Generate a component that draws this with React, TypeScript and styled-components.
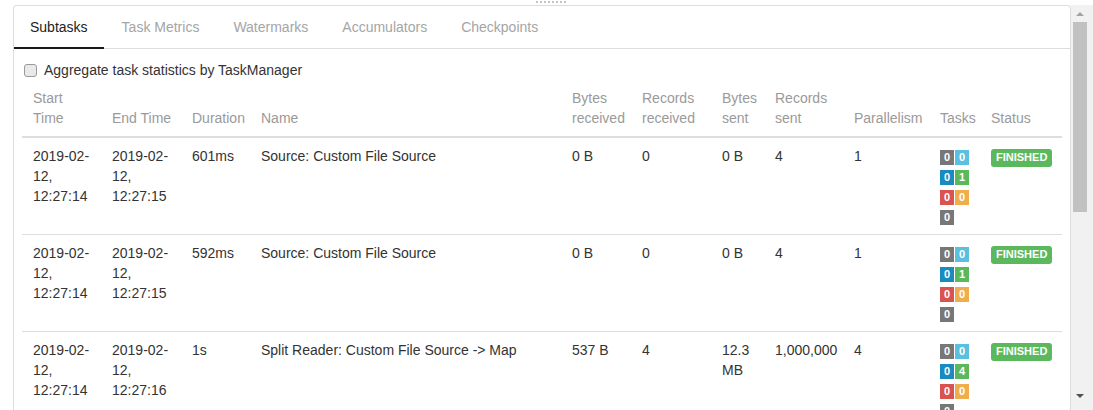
import React from 'react';
import styled, { createGlobalStyle } from 'styled-components';

const GlobalStyle = createGlobalStyle`
  html, body, #root {
    margin: 0;
    height: 100%;
    overflow: hidden;
  }
  body {
    background: #fff;
    font-family: "Liberation Sans", Arial, sans-serif;
    font-size: 14px;
    color: #333;
  }
`;

const Page = styled.div`
  display: flex;
  flex-direction: column;
  height: 410px;
`;

const Handle = styled.div`
  height: 5px;
  display: flex;
  justify-content: center;
  align-items: flex-start;
  gap: 2px;
  padding: 1px 0 0 9px;
  box-sizing: border-box;
`;

const Dot = styled.span`
  width: 2px;
  height: 2px;
  background: #c4c4c4;
`;

const Body = styled.div`
  display: flex;
  flex: 1;
  min-height: 0;
`;

const Main = styled.div`
  flex: 1;
  padding-left: 13px;
  overflow: hidden;
`;

const Panel = styled.div`
  border: 1px solid #ddd;
  border-bottom: none;
  border-radius: 4px 4px 0 0;
  background: #fff;
`;

const Tabs = styled.div`
  display: flex;
  gap: 2px;
  border-bottom: 1px solid #ddd;
`;

const Tab = styled.div<{ $active?: boolean }>`
  padding: 11px 16px 10px;
  line-height: 20px;
  margin-bottom: -1px;
  border-bottom: 2px solid ${p => (p.$active ? '#1a1a1a' : 'transparent')};
  color: ${p => (p.$active ? '#222' : '#a5a5a5')};
  cursor: pointer;
`;

const Content = styled.div`
  padding: 11px 8px 0;
`;

const CheckRow = styled.label`
  display: flex;
  align-items: center;
  height: 20px;
  line-height: 20px;
`;

const Checkbox = styled.input`
  appearance: none;
  width: 13px;
  height: 13px;
  margin: 0 7px 0 2px;
  border: 1px solid #9a9a9a;
  border-radius: 3px;
  background: #e9e9e9;
  box-sizing: border-box;
`;

const Table = styled.table`
  width: 100%;
  border-collapse: collapse;
  table-layout: fixed;
`;

const Th = styled.th`
  text-align: left;
  font-weight: normal;
  color: #9a9a9a;
  padding: 8px 4px 8px 8px;
  line-height: 20px;
  vertical-align: bottom;
  border-bottom: 2px solid #ddd;

  &:first-child {
    padding-left: 11px;
    padding-right: 8px;
  }
`;

const Td = styled.td`
  padding: 8px 4px 8px 8px;
  line-height: 20px;
  vertical-align: top;
  border-bottom: 1px solid #ddd;

  &:first-child {
    padding-left: 11px;
    padding-right: 8px;
  }
`;

const BadgeGrid = styled.div`
  display: grid;
  grid-template-columns: repeat(2, 14px);
  column-gap: 1px;
  row-gap: 5px;
  padding: 4px 0 1px;
`;

const Badge = styled.span<{ $color: string }>`
  display: block;
  height: 15px;
  line-height: 15px;
  text-align: center;
  background: ${p => p.$color};
  color: #fff;
  font-size: 11px;
  font-weight: bold;
`;

const Status = styled.span`
  display: inline-block;
  margin-top: 3px;
  padding: 3px 5px 4px;
  border-radius: 3px;
  background: #5cb85c;
  color: #fff;
  font-size: 11px;
  font-weight: bold;
  line-height: 11px;
`;

const Scrollbar = styled.div`
  width: 22px;
  background: #f1f1f1;
  display: flex;
  flex-direction: column;
`;

const ArrowButton = styled.div<{ $bottom?: boolean }>`
  width: 18px;
  height: 17px;
  display: flex;
  align-items: center;
  justify-content: center;
  margin-bottom: ${p => (p.$bottom ? '6px' : '0')};
`;

const Arrow = styled.span<{ $down?: boolean }>`
  width: 0;
  height: 0;
  border-left: 4px solid transparent;
  border-right: 4px solid transparent;
  ${p =>
    p.$down
      ? 'border-top: 4px solid #505050;'
      : 'border-bottom: 4px solid #a3a3a3;'}
`;

const Thumb = styled.div`
  width: 14px;
  height: 190px;
  margin-left: 2px;
  background: #c1c1c1;
`;

const Spacer = styled.div`
  flex: 1;
`;

const GREY = '#777';
const LIGHT_BLUE = '#5bc0de';
const BLUE = '#1a8bbf';
const GREEN = '#5cb85c';
const RED = '#d9534f';
const ORANGE = '#f0ad4e';

const tabs = ['Subtasks', 'Task Metrics', 'Watermarks', 'Accumulators', 'Checkpoints'];

const headers = [
  'Start Time',
  'End Time',
  'Duration',
  'Name',
  'Bytes received',
  'Records received',
  'Bytes sent',
  'Records sent',
  'Parallelism',
  'Tasks',
  'Status',
];

const widths = [82, 80, 69, 311, 70, 80, 53, 79, 86, 51, 79];

interface Row {
  start: string;
  end: string;
  duration: string;
  name: string;
  bytesIn: string;
  recordsIn: string;
  bytesOut: string;
  recordsOut: string;
  parallelism: string;
  finished: number;
}

const rows: Row[] = [
  {
    start: '2019-02-12, 12:27:14',
    end: '2019-02-12, 12:27:15',
    duration: '601ms',
    name: 'Source: Custom File Source',
    bytesIn: '0 B',
    recordsIn: '0',
    bytesOut: '0 B',
    recordsOut: '4',
    parallelism: '1',
    finished: 1,
  },
  {
    start: '2019-02-12, 12:27:14',
    end: '2019-02-12, 12:27:15',
    duration: '592ms',
    name: 'Source: Custom File Source',
    bytesIn: '0 B',
    recordsIn: '0',
    bytesOut: '0 B',
    recordsOut: '4',
    parallelism: '1',
    finished: 1,
  },
  {
    start: '2019-02-12, 12:27:14',
    end: '2019-02-12, 12:27:16',
    duration: '1s',
    name: 'Split Reader: Custom File Source -> Map',
    bytesIn: '537 B',
    recordsIn: '4',
    bytesOut: '12.3 MB',
    recordsOut: '1,000,000',
    parallelism: '4',
    finished: 4,
  },
];

function TaskCounts({ finished }: { finished: number }) {
  const counts: [number, string][] = [
    [0, GREY],
    [0, LIGHT_BLUE],
    [0, BLUE],
    [finished, GREEN],
    [0, RED],
    [0, ORANGE],
    [0, GREY],
  ];
  return (
    <BadgeGrid>
      {counts.map(([value, color], i) => (
        <Badge key={i} $color={color}>
          {value}
        </Badge>
      ))}
    </BadgeGrid>
  );
}

export default function App() {
  return (
    <Page>
      <GlobalStyle />
      <Handle>
        {Array.from({ length: 8 }).map((_, i) => (
          <Dot key={i} />
        ))}
      </Handle>
      <Body>
        <Main>
          <Panel>
            <Tabs>
              {tabs.map((tab, i) => (
                <Tab key={tab} $active={i === 0}>
                  {tab}
                </Tab>
              ))}
            </Tabs>
            <Content>
              <CheckRow>
                <Checkbox type="checkbox" />
                Aggregate task statistics by TaskManager
              </CheckRow>
              <Table>
                <colgroup>
                  {widths.map((w, i) => (
                    <col key={i} style={{ width: w }} />
                  ))}
                </colgroup>
                <thead>
                  <tr>
                    {headers.map(h => (
                      <Th key={h}>{h}</Th>
                    ))}
                  </tr>
                </thead>
                <tbody>
                  {rows.map((row, i) => (
                    <tr key={i}>
                      <Td>{row.start}</Td>
                      <Td>{row.end}</Td>
                      <Td>{row.duration}</Td>
                      <Td>{row.name}</Td>
                      <Td>{row.bytesIn}</Td>
                      <Td>{row.recordsIn}</Td>
                      <Td>{row.bytesOut}</Td>
                      <Td>{row.recordsOut}</Td>
                      <Td>{row.parallelism}</Td>
                      <Td>
                        <TaskCounts finished={row.finished} />
                      </Td>
                      <Td>
                        <Status>FINISHED</Status>
                      </Td>
                    </tr>
                  ))}
                </tbody>
              </Table>
            </Content>
          </Panel>
        </Main>
        <Scrollbar>
          <ArrowButton>
            <Arrow />
          </ArrowButton>
          <Thumb />
          <Spacer />
          <ArrowButton $bottom>
            <Arrow $down />
          </ArrowButton>
        </Scrollbar>
      </Body>
    </Page>
  );
}
